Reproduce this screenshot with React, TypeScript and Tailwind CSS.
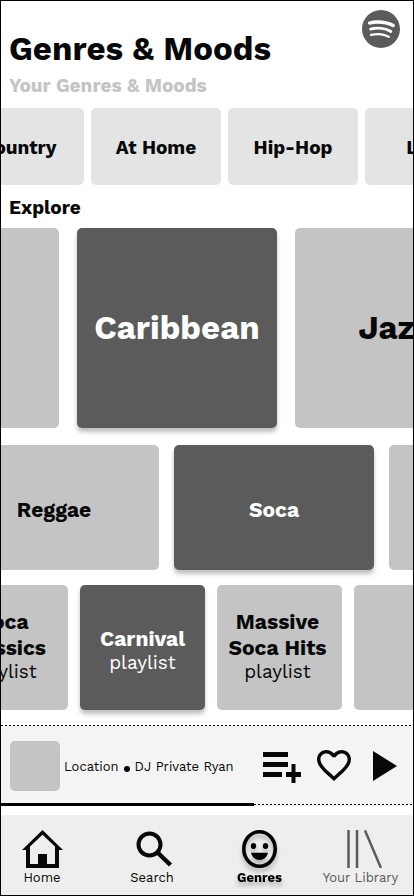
import type { ReactNode } from "react";
import { SiSpotify } from "react-icons/si";

const DASHES =
  "h-px w-full bg-[repeating-linear-gradient(90deg,#000_0px,#000_2px,transparent_2px,transparent_4px)]";

function Tile({ size, active = false, children }: { size: string; active?: boolean; children?: ReactNode }) {
  const tone = active ? "bg-[#5b5b5b] text-white shadow-[0_4px_4px_rgba(0,0,0,0.25)]" : "bg-[#c4c4c4] text-[#080808]";
  return (
    <button type="button" className={`flex shrink-0 flex-col items-center justify-center rounded-[5px] ${tone} ${size}`}>
      {children}
    </button>
  );
}

function Playlist({ name, active, size }: { name: string; active?: boolean; size: string }) {
  return (
    <Tile size={size} active={active}>
      <span className="text-[21px] leading-[26px] font-bold whitespace-pre">{name}</span>
      <span className="text-[19px] leading-[22px]">playlist</span>
    </Tile>
  );
}

function Chip({ children }: { children: string }) {
  return (
    <button
      type="button"
      className="flex h-[77px] w-[130px] shrink-0 items-center justify-center rounded-[5px] bg-[#e4e4e4] pt-1 text-[19px] font-bold"
    >
      {children}
    </button>
  );
}

function NavItem({ label, tone = "", children }: { label: string; tone?: string; children: ReactNode }) {
  return (
    <a href="#" className={`flex flex-col items-center pt-[15px] text-[13px] leading-5 ${tone}`}>
      {children}
      <span className="whitespace-nowrap">{label}</span>
    </a>
  );
}

export default function App() {
  return (
    <div className="flex min-h-screen flex-col overflow-hidden border border-black bg-white font-['Work_Sans',Inter,sans-serif] text-[#080808]">
      <header className="flex items-start justify-between pt-[9px] pr-[13px] pl-2">
        <div className="pt-[18px]">
          <h1 className="text-[33px] leading-[42px] font-bold">Genres &amp; Moods</h1>
          <p className="pt-px text-[19px] leading-[30px] font-bold text-[#c4c4c4]">Your Genres &amp; Moods</p>
        </div>
        <SiSpotify className="size-[38px] text-[#5b5b5b]" aria-label="Spotify" />
      </header>

      <main className="pt-[7px]">
        <div className="-ml-[47px] flex gap-[7px]">
          <Chip>Country</Chip>
          <Chip>At Home</Chip>
          <Chip>Hip-Hop</Chip>
          <Chip>Latin</Chip>
        </div>

        <h2 className="pt-[9px] pb-[6px] pl-2 text-[19px] leading-7 font-bold">Explore</h2>

        <div className="-ml-[142px] flex gap-[18px]">
          <Tile size="size-[200px]" />
          <Tile size="size-[200px]" active>
            <span className="text-[33px] leading-10 font-bold">Caribbean</span>
          </Tile>
          <Tile size="size-[200px]">
            <span className="text-[33px] leading-10 font-bold">Jazz</span>
          </Tile>
        </div>

        <div className="mt-[17px] -ml-[42px] flex gap-[15px]">
          <Tile size="h-[125px] w-[200px] pt-1 pr-[10px]">
            <span className="text-[21px] leading-[26px] font-bold">Reggae</span>
          </Tile>
          <Tile size="h-[125px] w-[200px] pt-1" active>
            <span className="text-[21px] leading-[26px] font-bold">Soca</span>
          </Tile>
          <Tile size="h-[125px] w-[200px]" />
        </div>

        <div className="mt-[15px] -ml-[58px] flex gap-3">
          <Playlist name={"Soca\nClassics"} size="size-[125px] pr-1 pb-1" />
          <Playlist name="Carnival" active size="size-[125px] pt-1" />
          <Playlist name={"Massive\nSoca Hits"} size="size-[125px] pr-1 pb-1" />
          <Tile size="size-[125px]" />
        </div>
      </main>

      <section aria-label="Now playing" className="mt-[15px] rounded-[5px] bg-[#f4f4f4]">
        <div className={DASHES} />
        <div className="flex h-[77px] items-center pt-[2px] pr-4 pl-[9px]">
          <div className="size-[50px] shrink-0 rounded-[5px] bg-[#c4c4c4]" />
          <p className="ml-1 flex grow items-center gap-[5px] pt-[2px] text-[13px] whitespace-nowrap">
            Location
            <span className="mt-1 size-[6px] rounded-full bg-[#080808]" />
            DJ Private Ryan
          </p>
          <div className="flex items-center gap-[15px]">
            <button type="button" aria-label="Add to playlist">
              <svg width="39" height="34" viewBox="0 -1 39 34" fill="currentColor">
                <path d="M0 2h25v5H0zM0 12h25v5H0zM0 22h19v5H0zM23 22h5.500v-8h4v8H38v5h-5.500v6h-4v-6H23z" />
              </svg>
            </button>
            <button type="button" aria-label="Like">
              <svg width="34" height="31" viewBox="2 3 20 18.35" fill="currentColor" preserveAspectRatio="none">
                <path d="M16.500 3c-1.740 0-3.410.81-4.500 2.090C10.910 3.810 9.240 3 7.500 3 4.420 3 2 5.420 2 8.500c0 3.780 3.400 6.860 8.550 11.540L12 21.350l1.450-1.320C18.600 15.360 22 12.280 22 8.500 22 5.420 19.580 3 16.500 3zm-4.400 15.550l-.1.100-.1-.1C7.140 14.240 4 11.390 4 8.500 4 6.500 5.500 5 7.500 5c1.540 0 3.040.99 3.570 2.360h1.870C13.460 5.990 14.960 5 16.500 5c2 0 3.500 1.500 3.500 3.500 0 2.890-3.140 5.740-7.900 10.050z" />
              </svg>
            </button>
            <button type="button" aria-label="Play" className="ml-[7px]">
              <svg width="24" height="30" viewBox="0 0 24 30" fill="currentColor">
                <path d="M0 0l24 15L0 30z" />
              </svg>
            </button>
          </div>
        </div>
        <div className="flex h-[3px] items-center">
          <div className="h-[3px] w-[253px] shrink-0 bg-black" />
          <div className={DASHES} />
        </div>
      </section>

      <nav aria-label="Main" className="mt-[9px] grid h-20 grid-cols-[82fr_138fr_77fr_115fr] bg-[#eee]">
        <NavItem label="Home">
          <svg width="41" height="38" viewBox="0 0 41 38" fill="currentColor">
            <path d="M0 20L20.500 0 41 20h-4v18H4V20zM8 16.500V34h25V16.500L20.500 4.800z" fillRule="evenodd" />
            <path d="M16 24h9v11h-9z" />
          </svg>
        </NavItem>
        <NavItem label="Search">
          <svg width="41" height="38" viewBox="0 0 41 38" fill="none" stroke="currentColor">
            <circle cx="17.500" cy="14.500" r="11" strokeWidth="4" />
            <path d="M25 22l13.500 13" strokeWidth="4.500" />
          </svg>
        </NavItem>
        <NavItem label="Genres" tone="font-bold text-black drop-shadow-[0_4px_2px_rgba(0,0,0,0.25)]">
          <svg width="35" height="38" viewBox="0 0 35 38" fill="currentColor">
            <ellipse cx="17.500" cy="19" rx="15.700" ry="17.200" fill="none" stroke="currentColor" strokeWidth="3.600" />
            <ellipse cx="11.500" cy="16" rx="2.700" ry="3" />
            <ellipse cx="23.500" cy="16" rx="2.700" ry="3" />
            <path d="M9 22.800h17c-1 4.400-4.400 7.200-8.500 7.200S10 27.200 9 22.800z" />
          </svg>
        </NavItem>
        <NavItem label="Your Library" tone="pl-[10px] text-[#5b5b5b]">
          <svg width="43" height="38" viewBox="0 0 43 38" fill="none" stroke="currentColor" strokeWidth="2.500">
            <path d="M9.500 0v38M18 0v38M26 0.500L42 38" />
          </svg>
        </NavItem>
      </nav>
    </div>
  );
}
